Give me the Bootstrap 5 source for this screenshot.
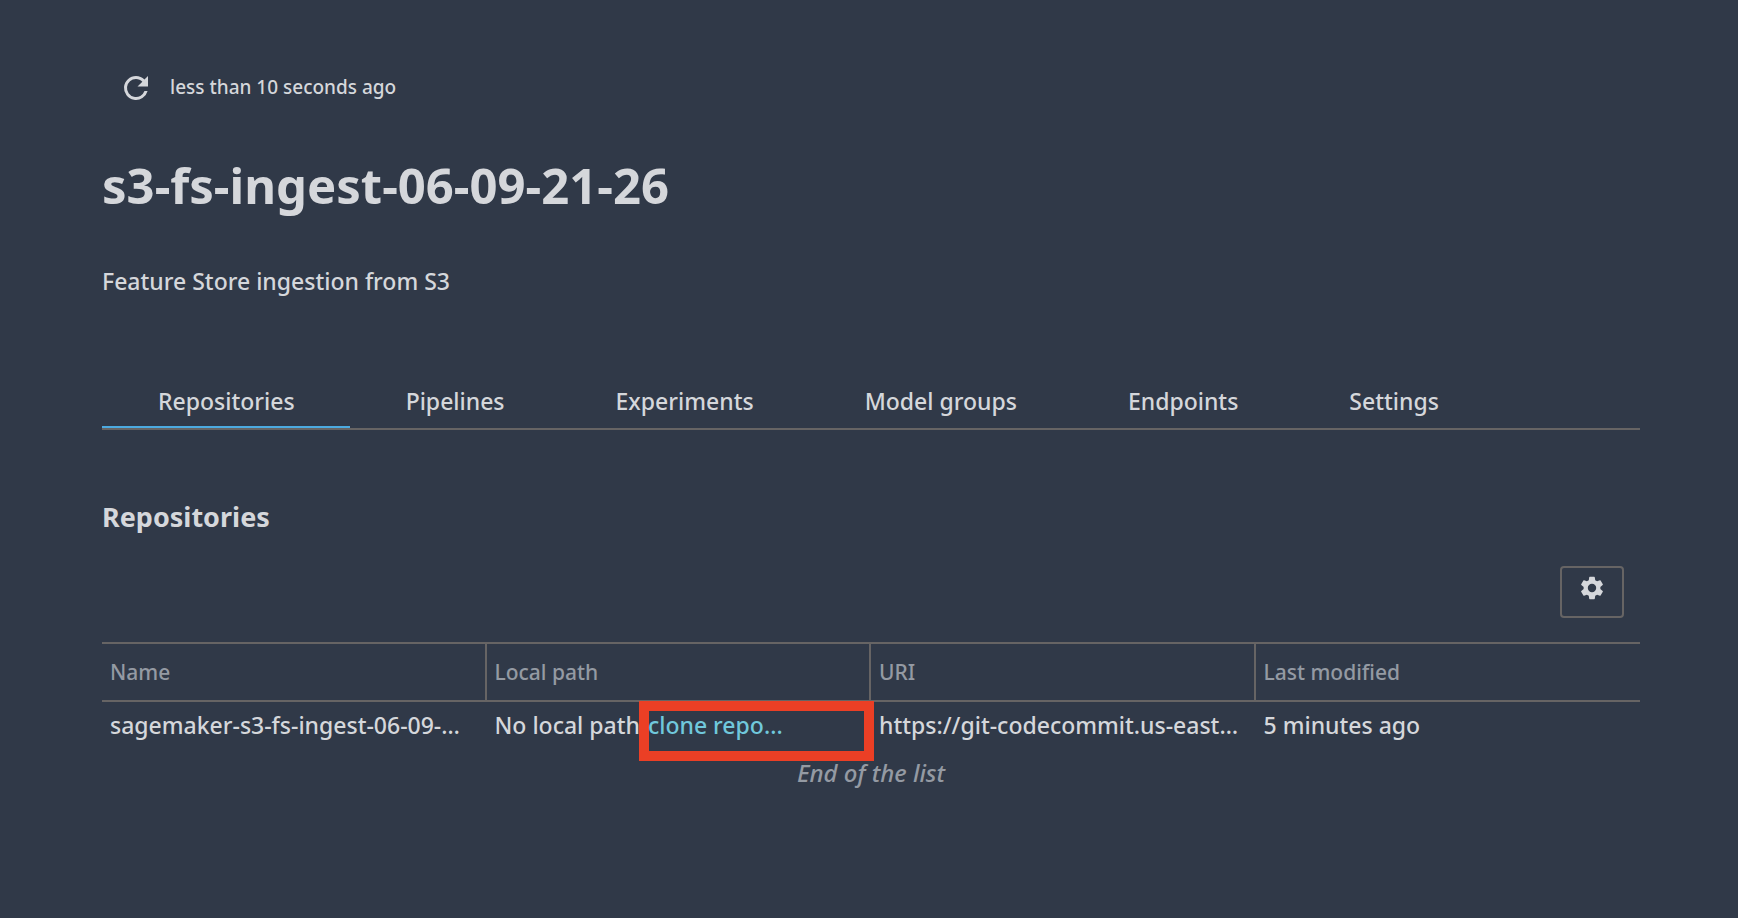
<!DOCTYPE html>
<html lang="en">
<head>
<meta charset="utf-8">
<meta name="viewport" content="width=device-width, initial-scale=1">
<title>s3-fs-ingest-06-09-21-26</title>
<link href="https://cdn.jsdelivr.net/npm/bootstrap@5.3.0/dist/css/bootstrap.min.css" rel="stylesheet">
<style>
  :root { --ink: #d5d7db; --dim: #949aa3; --rule: #666464; --page: #303948; }
  body { background: var(--page); color: var(--ink); font-family: "Noto Sans", "Open Sans", sans-serif; font-size: 23px; font-weight: 500; line-height: 36px; }
  main { padding: 70px 98px 48px 102px; }
  .sync { font-size: 19px; line-height: 34px; gap: 14px; padding-left: 16px; margin-bottom: 48px; }
  .refresh { width: 38px; height: 36px; }
  .refresh svg { width: 36px; height: 36px; }
  h1 { font-size: 49px; font-weight: 700; line-height: 62px; margin-bottom: 47px; }
  .summary { margin-bottom: 84px; }
  .nav-tabs { border-bottom: 2px solid var(--rule); margin-bottom: 67px; }
  .nav-tabs .nav-link { color: var(--ink); font-size: 23px; font-weight: 500; line-height: 36px; padding: 0 55px 9px 56px; border: 0; border-radius: 0; margin-bottom: 0; }
  .nav-tabs .nav-link.active { color: var(--ink); background: none; box-shadow: inset 0 -2px #4caae0; }
  h2 { font-size: 27px; font-weight: 700; line-height: 40px; margin-bottom: 29px; }
  .tools { padding-right: 16px; margin-bottom: 24px; }
  .gear { width: 64px; height: 52px; border: 2px solid var(--rule); border-radius: 4px; color: var(--ink); padding: 6px 0 0; }
  .gear:hover { border-color: var(--ink); color: var(--ink); }
  .gear svg { width: 28px; height: 28px; }
  .repos { table-layout: fixed; border-collapse: separate; border-spacing: 0; width: 100%; }
  .repos th { color: var(--dim); font-size: 21px; font-weight: 500; border: 2px solid var(--rule); border-left: 0; padding: 10px 8px; }
  .repos th:last-child { border-right: 0; }
  .repos td { padding: 5px 8px 12px; }
  .clone { color: #70c8dc; text-decoration: none; position: relative; z-index: 2; }
  .marker { left: 152px; right: -3px; top: -1px; height: 60px; border: 10px solid #eb3f25; z-index: 1; pointer-events: none; }
  .list-end { color: var(--dim); font-size: 24px; font-style: italic; }
</style>
</head>
<body>
<main>
  <div class="sync d-flex align-items-start">
    <button type="button" class="refresh btn border-0 p-0 d-flex" aria-label="Refresh">
      <svg viewBox="0 0 24 24" fill="#d5d7db"><path d="M17.65 6.35A7.96 7.96 0 0 0 12 4a8 8 0 1 0 7.73 10h-2.08A6 6 0 1 1 12 6c1.66 0 3.14.69 4.22 1.78L13 11h7V4z"/></svg>
    </button>
    <span>less than 10 seconds ago</span>
  </div>
  <h1>s3-fs-ingest-06-09-21-26</h1>
  <p class="summary">Feature Store ingestion from S3</p>
  <ul class="nav nav-tabs">
    <li class="nav-item"><a class="nav-link active" href="#repositories" aria-current="page">Repositories</a></li>
    <li class="nav-item"><a class="nav-link" href="#pipelines">Pipelines</a></li>
    <li class="nav-item"><a class="nav-link" href="#experiments">Experiments</a></li>
    <li class="nav-item"><a class="nav-link" href="#models">Model groups</a></li>
    <li class="nav-item"><a class="nav-link" href="#endpoints">Endpoints</a></li>
    <li class="nav-item"><a class="nav-link" href="#settings">Settings</a></li>
  </ul>
  <section id="repositories">
    <h2>Repositories</h2>
    <div class="tools d-flex justify-content-end">
      <button type="button" class="gear btn d-flex justify-content-center align-items-start" aria-label="Table settings">
        <svg viewBox="0 0 24 24" fill="currentColor"><path d="M19.14 12.94c.04-.3.06-.61.06-.94 0-.32-.02-.64-.07-.94l2.03-1.58a.49.49 0 0 0 .12-.61l-1.92-3.32a.488.488 0 0 0-.59-.22l-2.39.96c-.5-.38-1.03-.7-1.62-.94l-.36-2.54a.484.484 0 0 0-.48-.41h-3.84c-.24 0-.43.17-.47.41l-.36 2.54c-.59.24-1.13.57-1.62.94l-2.39-.96c-.22-.08-.47 0-.59.22L2.74 8.87c-.12.21-.08.47.12.61l2.03 1.58c-.05.3-.09.63-.09.94s.02.64.07.94l-2.03 1.58a.49.49 0 0 0-.12.61l1.92 3.32c.12.22.37.29.59.22l2.39-.96c.5.38 1.03.7 1.62.94l.36 2.54c.05.24.24.41.48.41h3.84c.24 0 .44-.17.47-.41l.36-2.54c.59-.24 1.13-.56 1.62-.94l2.39.96c.22.08.47 0 .59-.22l1.92-3.32c.12-.22.07-.47-.12-.61zM12 15.6A3.6 3.6 0 1 1 12 8.4a3.6 3.6 0 0 1 0 7.2z"/></svg>
      </button>
    </div>
    <table class="repos">
      <thead>
        <tr><th scope="col">Name</th><th scope="col">Local path</th><th scope="col">URI</th><th scope="col">Last modified</th></tr>
      </thead>
      <tbody>
        <tr>
          <td class="text-truncate">sagemaker-s3-fs-ingest-06-09-…</td>
          <td class="position-relative text-nowrap">
            <div class="d-flex gap-2"><span>No local path</span><a class="clone" href="#clone">clone repo...</a></div>
            <span class="marker position-absolute"></span>
          </td>
          <td class="text-truncate">https://git-codecommit.us-east…</td>
          <td class="text-truncate">5 minutes ago</td>
        </tr>
      </tbody>
    </table>
    <div class="list-end text-center">End of the list</div>
  </section>
</main>
<script src="https://cdn.jsdelivr.net/npm/bootstrap@5.3.0/dist/js/bootstrap.bundle.min.js"></script>
</body>
</html>
